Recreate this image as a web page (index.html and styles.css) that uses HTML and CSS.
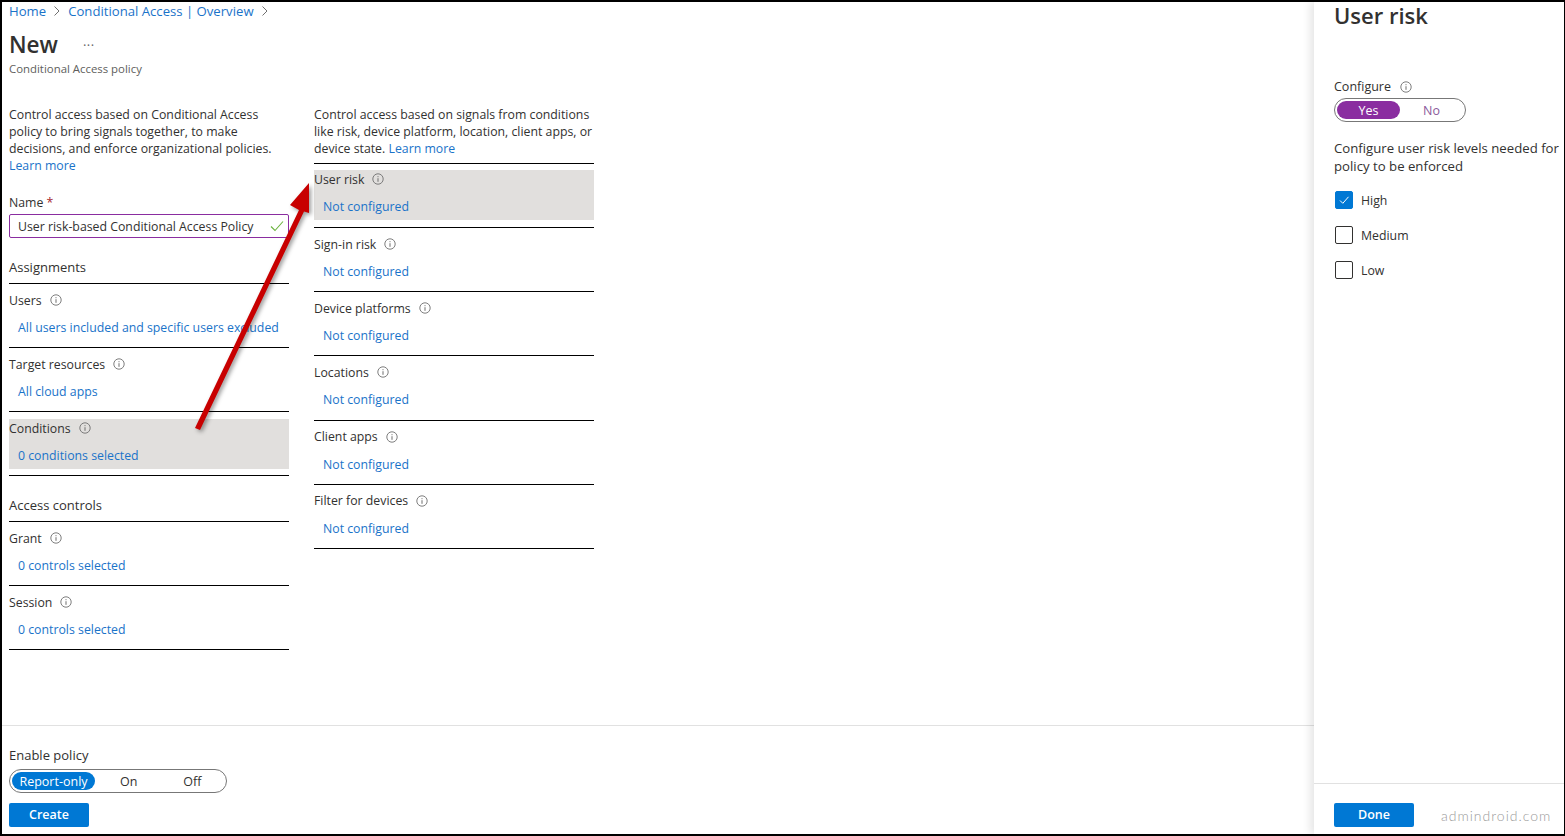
FILE: index.html
```html
<!DOCTYPE html>
<html lang="en">
<head>
<meta charset="utf-8">
<title>New Conditional Access policy</title>
<link rel="stylesheet" href="styles.css">
</head>
<body>
<svg class="defs" width="0" height="0" aria-hidden="true">
  <symbol id="info" viewBox="0 0 12 12">
    <circle cx="6" cy="6" r="5.2" fill="none" stroke="#6f6f6f" stroke-width="0.9"/>
    <rect x="5.5" y="5.2" width="1" height="3.6" fill="#6f6f6f"/>
    <rect x="5.5" y="3.2" width="1" height="1" fill="#6f6f6f"/>
  </symbol>
</svg>
<div class="app">
  <main class="main">
    <div class="content">
      <nav class="crumbs">
        <a>Home</a>
        <svg class="chev" viewBox="0 0 8 12"><path d="M1.5 1.5 6 6l-4.500 4.500" fill="none" stroke="#707070"/></svg>
        <a>Conditional Access | Overview</a>
        <svg class="chev" viewBox="0 0 8 12"><path d="M1.5 1.5 6 6l-4.500 4.500" fill="none" stroke="#707070"/></svg>
      </nav>
      <div class="title-row">
        <h1>New</h1>
        <span class="more">···</span>
      </div>
      <div class="subtitle">Conditional Access policy</div>
      <div class="columns">
        <section class="col">
          <p class="desc">Control access based on Conditional Access policy to bring signals together, to make decisions, and enforce organizational policies. <a>Learn more</a></p>
          <label class="field-label">Name <span class="req">*</span></label>
          <div class="input">
            <span>User risk-based Conditional Access Policy</span>
            <svg class="ok" viewBox="0 0 14 12"><path d="M1 6.500 5 10.500 13 1.500" fill="none" stroke="#6bb33f" stroke-width="1.100"/></svg>
          </div>
          <h2 class="section">Assignments</h2>
          <div class="row">
            <div class="row-in"><div class="row-label">Users <svg class="i"><use href="#info"/></svg></div><a class="row-link">All users included and specific users excluded</a></div>
          </div>
          <div class="row">
            <div class="row-in"><div class="row-label">Target resources <svg class="i"><use href="#info"/></svg></div><a class="row-link">All cloud apps</a></div>
          </div>
          <div class="row">
            <div class="row-in active"><div class="row-label">Conditions <svg class="i"><use href="#info"/></svg></div><a class="row-link">0 conditions selected</a></div>
          </div>
          <h2 class="section">Access controls</h2>
          <div class="row">
            <div class="row-in"><div class="row-label">Grant <svg class="i"><use href="#info"/></svg></div><a class="row-link">0 controls selected</a></div>
          </div>
          <div class="row">
            <div class="row-in"><div class="row-label">Session <svg class="i"><use href="#info"/></svg></div><a class="row-link">0 controls selected</a></div>
          </div>
        </section>
        <section class="col">
          <p class="desc desc-short">Control access based on signals from conditions like risk, device platform, location, client apps, or device state. <a>Learn more</a></p>
          <div class="list">
            <div class="row">
              <div class="row-in active"><div class="row-label">User risk <svg class="i"><use href="#info"/></svg></div><a class="row-link">Not configured</a></div>
            </div>
            <div class="row">
              <div class="row-in"><div class="row-label">Sign-in risk <svg class="i"><use href="#info"/></svg></div><a class="row-link">Not configured</a></div>
            </div>
            <div class="row">
              <div class="row-in"><div class="row-label">Device platforms <svg class="i"><use href="#info"/></svg></div><a class="row-link">Not configured</a></div>
            </div>
            <div class="row">
              <div class="row-in"><div class="row-label">Locations <svg class="i"><use href="#info"/></svg></div><a class="row-link">Not configured</a></div>
            </div>
            <div class="row">
              <div class="row-in"><div class="row-label">Client apps <svg class="i"><use href="#info"/></svg></div><a class="row-link">Not configured</a></div>
            </div>
            <div class="row">
              <div class="row-in"><div class="row-label">Filter for devices <svg class="i"><use href="#info"/></svg></div><a class="row-link">Not configured</a></div>
            </div>
          </div>
        </section>
      </div>
    </div>
    <footer class="footer">
      <div class="field-label enable">Enable policy</div>
      <div class="toggle toggle-wide">
        <span class="opt on-blue">Report-only</span>
        <span class="opt">On</span>
        <span class="opt">Off</span>
      </div>
      <button class="btn">Create</button>
    </footer>
  </main>
  <aside class="panel">
    <div class="panel-body">
      <h2 class="panel-title">User risk</h2>
      <div class="field-label cfg">Configure <svg class="i"><use href="#info"/></svg></div>
      <div class="toggle toggle-small">
        <span class="opt on-purple">Yes</span>
        <span class="opt no">No</span>
      </div>
      <p class="panel-desc">Configure user risk levels needed for policy to be enforced</p>
      <div class="checks">
        <div class="check"><span class="box checked"><svg viewBox="0 0 12 12"><path d="M2 6.500 4.800 9.300 10.500 2.800" fill="none" stroke="#fff"/></svg></span>High</div>
        <div class="check"><span class="box"></span>Medium</div>
        <div class="check"><span class="box"></span>Low</div>
      </div>
    </div>
    <div class="panel-foot">
      <button class="btn">Done</button>
      <span class="mark">admindroid.com</span>
    </div>
  </aside>
  <svg class="arrow" viewBox="0 0 140 270" width="140" height="270">
    <path fill="#c80000" d="M8 254 112 36l-9-5L122 9v30l-5-1.500L13 256z"/>
  </svg>
</div>
</body>
</html>
```
FILE: styles.css
```css
* { box-sizing: border-box; }
html, body { margin: 0; height: 100%; }
body {
  font-family: "Open Sans", "Noto Sans", sans-serif;
  font-size: 12.3px;
  color: #323130;
  background: #fff;
  overflow: hidden;
}
.defs { position: absolute; }
a { color: #1a73c9; text-decoration: none; }
.app {
  position: relative;
  display: flex;
  width: 1565px;
  height: 836px;
  border: 2px solid #000;
  border-right-width: 1px;
  overflow: hidden;
}
.main {
  flex: 1;
  display: flex;
  flex-direction: column;
  min-width: 0;
}
.content { flex: 1; padding: 0 7px; }
.crumbs {
  display: flex;
  align-items: center;
  height: 18px;
  font-size: 13.15px;
  line-height: 18px;
}
.chev { width: 8px; height: 12px; margin: 0 7px; }
.title-row { display: flex; align-items: center; height: 32px; margin-top: 9px; }
h1 { margin: 0; font-size: 22.5px; font-weight: 600; line-height: 32px; }
.more { margin-left: 25px; color: #666; font-size: 13px; letter-spacing: 0.5px; line-height: 12px; }
.subtitle { font-size: 11.4px; color: #605e5c; line-height: 16px; }
.columns { display: flex; gap: 25px; margin-top: 29px; }
.col { width: 280px; }
.desc { margin: 0; line-height: 17px; height: 68px; }
.desc-short { height: 51px; margin-bottom: 6px; }
.field-label { line-height: 17px; }
.col > .field-label { display: block; margin-top: 20px; }
.req { color: #a4262c; }
.input {
  display: flex;
  align-items: center;
  justify-content: space-between;
  height: 24px;
  margin-top: 3px;
  padding: 0 4px 0 8px;
  border: 1px solid #8a2da0;
  border-radius: 2px;
}
.ok { width: 14px; height: 12px; }
.section {
  margin: 21px 0 0;
  height: 25px;
  font-size: 13px;
  font-weight: 400;
  line-height: 17px;
  border-bottom: 1px solid #000;
}
.list { border-top: 1px solid #000; }
.row {
  height: 64px;
  padding-top: 7px;
  border-bottom: 1px solid #000;
}
.list .row { height: 64.17px; }
.list .row:first-child { padding-top: 6px; }
.row-in { height: 50px; padding-top: 0.5px; }
.active { background: #e1dfdd; }
.row-label {
  display: flex;
  align-items: center;
  gap: 8px;
  height: 17px;
  line-height: 17px;
}
.i { width: 12px; height: 12px; flex: none; }
.row-link { display: block; margin-top: 10.5px; padding-left: 9px; line-height: 17px; }
.footer {
  height: 109px;
  padding: 21px 7px 0;
  border-top: 1px solid #e1e1e1;
}
.enable { font-size: 13px; }
.toggle {
  display: flex;
  align-items: center;
  border: 1px solid #777;
  border-radius: 12px;
  padding: 0 2px;
  background: #fff;
  font-size: 12.5px;
}
.toggle-wide { width: 218px; height: 24px; margin-top: 5px; }
.toggle-wide .opt { width: 65px; }
.toggle-wide .opt:first-child { width: 85px; margin-right: 2px; }
.toggle-small { width: 132px; height: 24px; margin-top: 3px; }
.toggle-small .opt { width: 64px; }
.opt {
  display: block;
  height: 18px;
  line-height: 20px;
  text-align: center;
  border-radius: 9px;
}
.on-blue { background: #0078d4; color: #fff; }
.on-purple { background: #8a2da0; color: #fff; }
.no { color: #8a5a9b; }
.btn {
  display: block;
  width: 80px;
  height: 24px;
  margin-top: 10px;
  border: 0;
  border-radius: 2px;
  background: #0078d4;
  color: #fff;
  font: 600 12.5px/24px "Open Sans", "Noto Sans", sans-serif;
  padding: 0;
}
.panel {
  width: 250px;
  display: flex;
  flex-direction: column;
  box-shadow: -4px 0 8px rgba(0, 0, 0, 0.1);
  background: #fff;
  z-index: 1;
}
.panel-body { flex: 1; padding: 0 0 0 20px; }
.panel-title { margin: 0; font-size: 22px; font-weight: 600; line-height: 26px; }
.cfg { display: flex; align-items: center; gap: 9px; margin-top: 50px; font-size: 12.5px; }
.panel-desc { margin: 17px 0 0; font-size: 13.2px; line-height: 18px; width: 230px; }
.checks { margin-top: 16px; }
.check { display: flex; align-items: center; gap: 8px; height: 18px; margin-bottom: 17px; }
.box {
  width: 18px;
  height: 18px;
  margin-left: 1px;
  border: 1px solid #323130;
  border-radius: 2px;
  display: flex;
  align-items: center;
  justify-content: center;
}
.box.checked { background: #0078d4; border-color: #0078d4; }
.box svg { width: 12px; height: 12px; }
.panel-foot {
  display: flex;
  align-items: center;
  height: 51px;
  padding: 19px 0 7px 20px;
  border-top: 1px solid #e1e1e1;
}
.panel-foot .btn { margin-top: 0; }
.mark {
  margin-left: 27px;
  font-family: Lato, sans-serif;
  font-size: 14px;
  font-weight: 300;
  letter-spacing: 1px;
  color: #9a9a9a;
}
.arrow {
  position: absolute;
  left: 185px;
  top: 172px;
  pointer-events: none;
  z-index: 2;
  filter: drop-shadow(2px 2px 2px rgba(0, 0, 0, 0.4));
}
```
